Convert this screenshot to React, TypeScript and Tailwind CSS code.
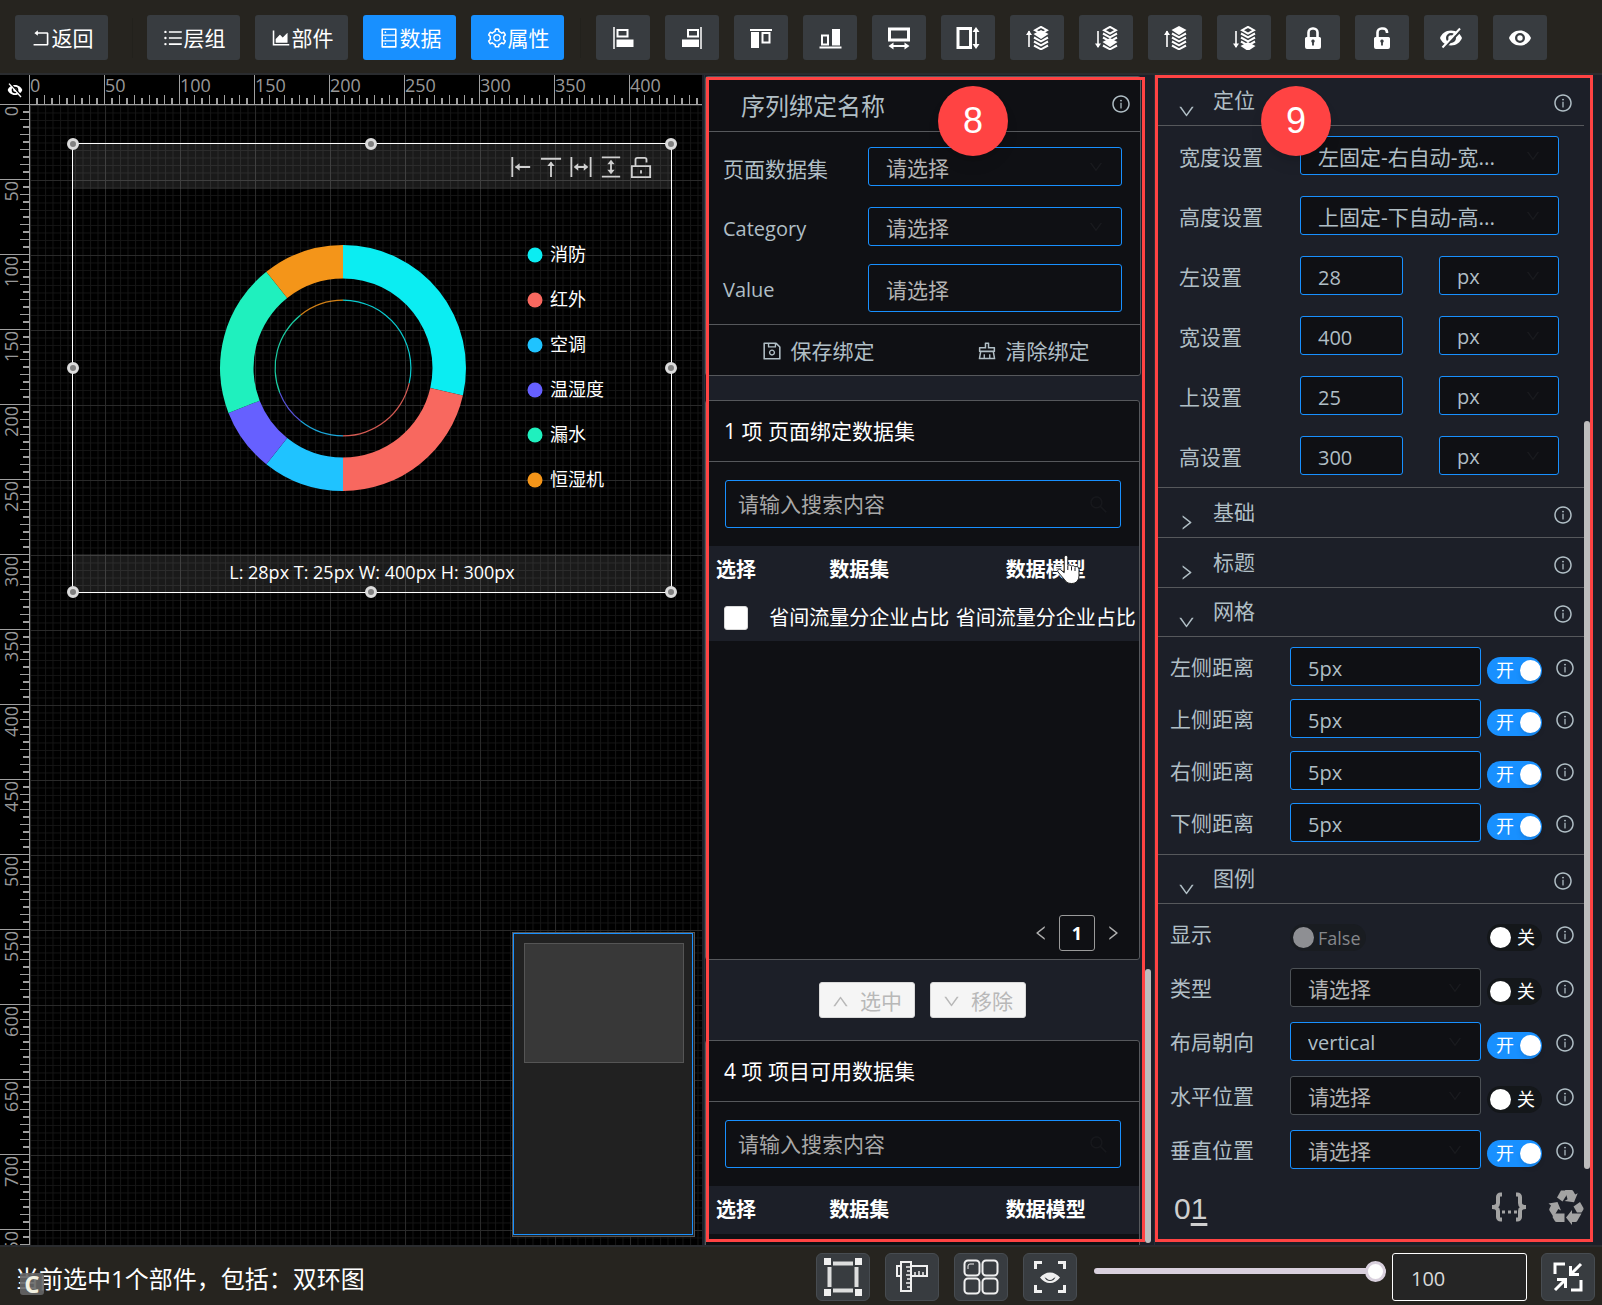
import { useId, useState, type ReactNode } from "react";
import clsx from "clsx";
import {
  AiOutlineAreaChart,
  AiOutlineClear,
  AiOutlineDatabase,
  AiOutlineDown,
  AiOutlineInfoCircle,
  AiOutlineLeft,
  AiOutlineRight,
  AiOutlineRollback,
  AiOutlineSave,
  AiOutlineSearch,
  AiOutlineSetting,
  AiOutlineUnorderedList,
  AiOutlineUp,
} from "react-icons/ai";

const PX_PER_UNIT = 1.5;

const slices = [
  { name: "消防", color: "#0bedf2", from: 0, to: 102.86 },
  { name: "红外", color: "#f8685f", from: 102.86, to: 180 },
  { name: "空调", color: "#1fc3ff", from: 180, to: 218.57 },
  { name: "温湿度", color: "#6660ff", from: 218.57, to: 248.6 },
  { name: "漏水", color: "#1ff0be", from: 248.6, to: 321.43 },
  { name: "恒湿机", color: "#f49519", from: 321.43, to: 360 },
];

/* ---------- icons ---------- */

function Glyph({ size = 24, children }: { size?: number; children: ReactNode }) {
  return (
    <svg width={size} height={size} viewBox="0 0 24 24" fill="none" stroke="currentColor" aria-hidden="true">
      {children}
    </svg>
  );
}

const AlignLeft = () => (
  <Glyph>
    <path d="M3 1v22" strokeWidth="1.5" />
    <rect x="6.5" y="4" width="10" height="6.5" strokeWidth="2" />
    <rect x="5.5" y="13.5" width="17" height="7.5" fill="currentColor" stroke="none" />
  </Glyph>
);

const AlignRight = () => (
  <Glyph>
    <path d="M21 1v22" strokeWidth="1.5" />
    <rect x="8" y="4" width="10" height="6.5" strokeWidth="2" />
    <rect x="2" y="13.5" width="17" height="7.5" fill="currentColor" stroke="none" />
  </Glyph>
);

const AlignTop = () => (
  <Glyph>
    <path d="M1 4h22" strokeWidth="2" />
    <rect x="2" y="6" width="8" height="16" fill="currentColor" stroke="none" />
    <rect x="13.5" y="7" width="7" height="9.5" strokeWidth="2" />
  </Glyph>
);

const AlignBottom = () => (
  <Glyph>
    <path d="M1.5 21.5h22" strokeWidth="2" />
    <rect x="4" y="9.5" width="6" height="9" strokeWidth="2" />
    <rect x="14" y="3" width="8" height="16.5" fill="currentColor" stroke="none" />
  </Glyph>
);

const SameWidth = () => (
  <Glyph>
    <rect x="2.5" y="3" width="19" height="11" strokeWidth="3" />
    <path d="M5 20h14" strokeWidth="2" />
    <path d="M1.5 20l5-3.5v7zM22.5 20l-5-3.5v7z" fill="currentColor" stroke="none" />
  </Glyph>
);

const SameHeight = () => (
  <Glyph>
    <rect x="2" y="2.5" width="12.5" height="19" strokeWidth="3" />
    <path d="M20 5v15" strokeWidth="1.8" />
    <path d="M20 1l3.5 5h-7zM20 23l3.5-5h-7z" fill="currentColor" stroke="none" />
  </Glyph>
);

function Layers({ arrow, solid }: { arrow: "up" | "down"; solid: number }) {
  return (
    <Glyph>
      <path d="M4 5v16" strokeWidth="1.6" />
      <path
        d={arrow === "up" ? "M4 4.5l3 4.5H1z" : "M4 22l3-4.5H1z"}
        fill="currentColor"
        stroke="none"
      />
      {[0, 1, 2, 3, 4].map((n) => {
        const y = 4 + n * 4;
        if (n === solid) {
          return (
            <path
              key={n}
              d={`M16 ${y - 4}l7.5 4l-7.5 5l-7.5 -5z`}
              fill="currentColor"
              stroke="none"
            />
          );
        }
        if (n === 0) {
          return <path key={n} d="M16 0.8l6 3.4l-6 3.4l-6-3.4z" strokeWidth="1.9" />;
        }
        return <path key={n} d={`M9 ${y - 0.5}l7 3.8l7-3.8`} strokeWidth="2" />;
      })}
    </Glyph>
  );
}

function Lock({ open = false }: { open?: boolean }) {
  return (
    <Glyph>
      <path
        d={open ? "M7.5 12V6.5a4 4 0 0 1 4-4h1.5a4 4 0 0 1 4 3.5v1" : "M7.5 12V6.5a4 4 0 0 1 4-4h1a4 4 0 0 1 4 4V12"}
        strokeWidth="2.6"
      />
      <path
        d="M5.5 11h13a1.5 1.5 0 0 1 1.5 1.5v8.5a2 2 0 0 1-2 2H6a2 2 0 0 1-2-2v-8.5A1.5 1.5 0 0 1 5.5 11zM12 13.5a1.8 1.8 0 0 0-.9 3.3v2.7h1.8v-2.7a1.8 1.8 0 0 0-.9-3.3z"
        fill="currentColor"
        stroke="none"
        fillRule="evenodd"
      />
    </Glyph>
  );
}

const eyePath =
  "M12 4.5C6.5 4.5 2.5 8 1 12c1.5 4 5.5 7.5 11 7.5S21.5 16 23 12c-1.5-4-5.5-7.5-11-7.5zM12 7a5 5 0 1 1 0 10a5 5 0 0 1 0-10zM12 9.3a2.7 2.7 0 1 0 0 5.4a2.7 2.7 0 0 0 0-5.4z";

const Eye = () => (
  <Glyph>
    <path d={eyePath} fill="currentColor" stroke="none" fillRule="evenodd" />
  </Glyph>
);

function EyeOff({ size = 24, flip = false }: { size?: number; flip?: boolean }) {
  const id = useId();
  return (
    <Glyph size={size}>
      <mask id={id}>
        <rect width="24" height="24" fill="#fff" stroke="none" />
        <path d={flip ? "M4 1l18 20" : "M22 4.5L5 22.5"} stroke="#000" strokeWidth="2.2" />
      </mask>
      <path d={eyePath} fill="currentColor" stroke="none" fillRule="evenodd" mask={`url(#${id})`} />
      <path d={flip ? "M3 2.5l18 20" : "M21 2.5L3.5 21.5"} strokeWidth="2" />
    </Glyph>
  );
}

const FrameIcon = () => (
  <svg width="38" height="38" viewBox="0 0 38 38" fill="currentColor" aria-hidden="true">
    <path d="M0 0h7v7H0zM31 0h7v7h-7zM0 31h7v7H0zM31 31h7v7h-7z" />
    <path d="M9 3.5h20v4H9zM9 30.5h20v4H9zM3.5 9h4v20h-4zM30.5 9h4v20h-4z" opacity="0.9" />
  </svg>
);

const RulerIcon = () => (
  <svg width="34" height="34" viewBox="0 0 34 34" fill="none" stroke="currentColor" strokeWidth="2" aria-hidden="true">
    <path d="M6 2h10v29H6zM16 6h16v10H16M6 6H2v10h4" />
    <path d="M11 7h5M12 11h4M11 15h5M12 19h4M11 23h5M12 27h4M20 16v-4M24 16v-5M28 16v-4" strokeWidth="1.5" />
  </svg>
);

const GridIcon = () => (
  <svg width="36" height="36" viewBox="0 0 36 36" fill="none" stroke="currentColor" strokeWidth="2" aria-hidden="true">
    <rect x="1.5" y="1.5" width="15" height="15" rx="3.5" />
    <rect x="19.5" y="1.5" width="15" height="15" rx="3.5" />
    <rect x="1.5" y="19.5" width="15" height="15" rx="3.5" />
    <rect x="19.5" y="19.5" width="15" height="15" rx="3.5" />
    <path d="M5 10V7a2 2 0 0 1 2-2h4" strokeWidth="1" />
  </svg>
);

const ScanEyeIcon = () => (
  <svg width="32" height="32" viewBox="0 0 32 32" fill="none" stroke="currentColor" aria-hidden="true">
    <path d="M8 1.5H1.5V8M24 1.5h6.5V8M8 30.5H1.5V24M24 30.5h6.5V24" strokeWidth="3" />
    <path
      d="M6 16.5c2.5-3 6-5 10-5s7.5 2 10 5c-2.5 3.5-6 5.5-10 5.5s-7.5-2-10-5.5zM10.5 15.5c.5 3 3 4.5 5.5 4.5s5-1.5 5.5-4.5c-.6 1-1.2 1.5-2 1.8c0 0-1 1.7-3.5 1.7s-3.5-1.7-3.5-1.7c-.8-.3-1.4-.8-2-1.8z"
      fill="currentColor"
      stroke="none"
      fillRule="evenodd"
    />
  </svg>
);

const ShrinkIcon = () => (
  <svg width="30" height="30" viewBox="0 0 30 30" fill="none" stroke="currentColor" strokeWidth="3" aria-hidden="true">
    <path d="M2 12V2h10M28 18v10H18" />
    <path d="M28 2l-9 9M17.5 4v8.5H26M2 28l9-9M4 17.5h8.5V26" />
  </svg>
);

const BracesIcon = () => (
  <svg width="36" height="30" viewBox="0 0 36 30" fill="none" stroke="currentColor" strokeWidth="3" aria-hidden="true">
    <path
      d="M11 2.5H9.5a2.5 2.5 0 0 0-2.500 2.500v6c0 2.500-1.500 4-6 4c4.500 0 6 1.500 6 4v6a2.500 2.500 0 0 0 2.500 2.500H11M25 2.500h1.500a2.500 2.500 0 0 1 2.500 2.500v6c0 2.500 1.500 4 6 4c-4.500 0-6 1.500-6 4v6a2.500 2.500 0 0 1-2.500 2.500H25"
      strokeWidth="4"
    />
    <path d="M11 20h3M17 20h3M23 20h3" />
  </svg>
);

const RecycleIcon = () => (
  <svg width="36" height="35" viewBox="0 0 36 35" fill="currentColor" aria-hidden="true">
    <path d="M9 7.5L13 0.500h5.500L20 3l-5.500 8.500z" />
    <path d="M17 0h6.500a2 2 0 0 1 1.700 1l2 3.500l2.500-1.300l-3.700 9l-9.500-1.200l3-1.700z" />
    <path d="M0.500 13.500L9.500 12L13 20.500l-2.700-1.500L5.500 27l-4-6.500a2 2 0 0 1 0-2l1.500-3z" />
    <path d="M6.500 23.500H16.500V32H8.500a2 2 0 0 1-1.700-1l-2.300-4z" />
    <path d="M25.500 16.500l6.500-4.500l3.300 5.700a2 2 0 0 1 0 2L33.500 22.500h-4.500z" />
    <path d="M18 27.500L24 20v3.500h9.500l-4.300 7.500a2 2 0 0 1-1.700 1H24v3z" />
  </svg>
);

const HandCursor = () => (
  <svg width="26" height="31" viewBox="0 0 26 31" aria-hidden="true">
    <path
      d="M10 1.5c1 0 1.8.8 1.8 2v8c.6-.8 3-.8 3.6.6c1-.8 3-.5 3.6.8c1.2-.8 4-.2 4 2.3v6c0 5-2.5 8.3-7.5 8.3c-4 0-5.5-1.5-7.3-4.3L2 18c-1-1.8.8-3.6 2.7-2.3l3.5 3V3.5c0-1.2.8-2 1.8-2z"
      fill="#fff"
      stroke="#1b1b1b"
      strokeWidth="1"
    />
    <path d="M11.8 12v4M15.5 12.5v4M19 13.5v3.5" stroke="#1b1b1b" strokeWidth="1" />
  </svg>
);

/* ---------- toolbar ---------- */

const menuButtons = [
  { label: "层组", icon: AiOutlineUnorderedList, active: false },
  { label: "部件", icon: AiOutlineAreaChart, active: false },
  { label: "数据", icon: AiOutlineDatabase, active: true },
  { label: "属性", icon: AiOutlineSetting, active: true },
];

const toolButtons = [
  { title: "左对齐", icon: <AlignLeft /> },
  { title: "右对齐", icon: <AlignRight /> },
  { title: "上对齐", icon: <AlignTop /> },
  { title: "下对齐", icon: <AlignBottom /> },
  { title: "等宽", icon: <SameWidth /> },
  { title: "等高", icon: <SameHeight /> },
  { title: "上移一层", icon: <Layers arrow="up" solid={1} /> },
  { title: "下移一层", icon: <Layers arrow="down" solid={3} /> },
  { title: "置顶", icon: <Layers arrow="up" solid={0} /> },
  { title: "置底", icon: <Layers arrow="down" solid={4} /> },
  { title: "锁定", icon: <Lock /> },
  { title: "解锁", icon: <Lock open /> },
  { title: "隐藏", icon: <EyeOff /> },
  { title: "显示", icon: <Eye /> },
];

function Toolbar() {
  return (
    <header className="flex h-[75px] shrink-0 items-center border-b-2 border-[#2a2c2f] bg-[#26241f] pt-0.5 pl-[15px] text-white">
      <button className="flex h-[45px] w-[93px] items-center justify-center rounded-[3px] bg-[#383c40]">
        <AiOutlineRollback size={22} />
        返回
      </button>
      <div className="mr-3.5 ml-6 h-10 w-px bg-[#22211c]" />
      <nav className="flex gap-[15px]">
        {menuButtons.map(({ label, icon: Icon, active }) => (
          <button
            key={label}
            className={clsx(
              "flex h-[45px] w-[93px] items-center justify-center rounded-[3px]",
              active ? "bg-[#1890ff]" : "bg-[#383c40]"
            )}
          >
            <Icon size={22} />
            {label}
          </button>
        ))}
      </nav>
      <div className="mr-[15px] ml-4 h-10 w-px bg-[#22211c]" />
      <div className="flex gap-[15px]">
        {toolButtons.map((tool) => (
          <button
            key={tool.title}
            aria-label={tool.title}
            className="flex h-[45px] w-[54px] items-center justify-center rounded-[3px] bg-[#383c40]"
          >
            {tool.icon}
          </button>
        ))}
      </div>
    </header>
  );
}

/* ---------- canvas ---------- */

function HorizontalRuler() {
  const ticks = Array.from({ length: 240 }, (_, i) => i + 1);
  return (
    <svg className="block h-[29px] w-full" aria-hidden="true">
      {ticks.map((i) => {
        const x = i * 5 * PX_PER_UNIT - 0.5;
        if (i % 10 === 0) return <path key={i} d={`M${x} 0V29`} stroke="#a0a0a0" />;
        if (i % 2 === 0) return <path key={i} d={`M${x} 20V29`} stroke="#a0a0a0" />;
        return <path key={i} d={`M${x} 23V29`} stroke="#a0a0a0" strokeWidth="2" />;
      })}
      {Array.from({ length: 9 }, (_, i) => (
        <text key={i} x={i * 75} y="17" fontSize="18" fill="#989898">
          {i * 50}
        </text>
      ))}
    </svg>
  );
}

function VerticalRuler() {
  const ticks = Array.from({ length: 240 }, (_, i) => i + 1);
  return (
    <svg className="block h-full w-[29px]" aria-hidden="true">
      {ticks.map((i) => {
        const y = i * 5 * PX_PER_UNIT - 0.5;
        if (i % 10 === 0) return <path key={i} d={`M0 ${y}H29`} stroke="#a0a0a0" />;
        if (i % 2 === 0) return <path key={i} d={`M20 ${y}H29`} stroke="#a0a0a0" />;
        return <path key={i} d={`M23 ${y}H29`} stroke="#a0a0a0" strokeWidth="2" />;
      })}
      {Array.from({ length: 16 }, (_, i) => (
        <text
          key={i}
          transform={`translate(18 ${i * 75 + 1}) rotate(-90)`}
          textAnchor="end"
          fontSize="18"
          fill="#989898"
        >
          {i * 50}
        </text>
      ))}
    </svg>
  );
}

function point(radius: number, angle: number) {
  const rad = (angle * Math.PI) / 180;
  return `${270 + radius * Math.sin(rad)} ${224 - radius * Math.cos(rad)}`;
}

function ringPath(outer: number, inner: number, from: number, to: number) {
  return (
    `M${point(outer, from)}A${outer} ${outer} 0 0 1 ${point(outer, to)}` +
    `L${point(inner, to)}A${inner} ${inner} 0 0 0 ${point(inner, from)}Z`
  );
}

function DoubleRing() {
  return (
    <svg className="block h-full w-full" viewBox="0 0 598 448" role="img" aria-label="双环图">
      {slices.map((s, i) => (
        <g key={s.name}>
          <path d={ringPath(123, 89.5, s.from, s.to)} fill={s.color} />
          <path d={ringPath(68.5, 67.3, s.from, s.to)} fill={s.color} opacity="0.85" />
          <circle cx="462" cy={111 + i * 45} r="7.5" fill={s.color} />
          <text x="477" y={117 + i * 45} fontSize="18" fill="#fff">
            {s.name}
          </text>
        </g>
      ))}
    </svg>
  );
}

const handles = [
  "-left-1.5 -top-1.5",
  "left-[292px] -top-1.5",
  "-right-1.5 -top-1.5",
  "-left-1.5 top-[218px]",
  "-right-1.5 top-[218px]",
  "-left-1.5 -bottom-1.5",
  "left-[292px] -bottom-1.5",
  "-right-1.5 -bottom-1.5",
];

function Widget() {
  return (
    <div className="absolute top-[38px] left-[42px] h-[450px] w-[600px] border border-white">
      <DoubleRing />
      <div className="absolute inset-x-0 top-0 flex h-[45px] items-center justify-end gap-2 bg-white/10 pr-[19px] text-[#d0d0d0]">
        <Glyph size={22}>
          <path d="M2.5 1v22M6 12h16" strokeWidth="2" />
          <path d="M5.5 12l5-4v8z" fill="currentColor" stroke="none" />
        </Glyph>
        <Glyph size={22}>
          <path d="M1 3h22M12 7v16" strokeWidth="2" />
          <path d="M12 6l4 5H8z" fill="currentColor" stroke="none" />
        </Glyph>
        <Glyph size={22}>
          <path d="M1.5 1v22M22.5 1v22M6 12h12" strokeWidth="2" />
          <path d="M4 12l5-4v8zM20 12l-5-4v8z" fill="currentColor" stroke="none" />
        </Glyph>
        <Glyph size={22}>
          <path d="M2 1.5h20M2 22.5h20M12 6v12" strokeWidth="2" />
          <path d="M12 4l4 5H8zM12 20l4-5H8z" fill="currentColor" stroke="none" />
        </Glyph>
        <Glyph size={22}>
          <path d="M2 11h20v12H2zM6 11V4a2 2 0 0 1 2-2h8a2 2 0 0 1 2 2v3M12 15.5v3.5" strokeWidth="2" />
        </Glyph>
      </div>
      <div className="absolute inset-x-0 bottom-0 flex h-[38px] items-center justify-center bg-white/10 pb-0.5 text-lg text-white">
        L: 28px T: 25px W: 400px H: 300px
      </div>
      {handles.map((place) => (
        <span
          key={place}
          className={clsx("absolute size-3 rounded-full border-[3px] border-[#dcdcdc] bg-[#808080]", place)}
        />
      ))}
    </div>
  );
}

function Canvas() {
  return (
    <section className="grid min-w-0 flex-1 grid-cols-[30px_1fr] grid-rows-[30px_1fr] overflow-hidden border-r-2 border-[#1c1f28] bg-black">
      <div className="flex items-center justify-center border-r border-b border-[#a0a0a0] text-white">
        <EyeOff size={16} flip />
      </div>
      <div className="border-b border-[#a0a0a0]">
        <HorizontalRuler />
      </div>
      <div className="min-h-0 overflow-hidden border-r border-[#a0a0a0]">
        <VerticalRuler />
      </div>
      <div className="relative min-h-0 overflow-hidden">
        <svg className="block h-full w-full" aria-hidden="true">
          <defs>
            <pattern id="minor" width="7.5" height="7.5" patternUnits="userSpaceOnUse">
              <path d="M0.5 0V7.5M0 0.5H7.5" stroke="#151515" />
            </pattern>
            <pattern id="major" width="75" height="75" patternUnits="userSpaceOnUse">
              <path d="M0.5 0V75M0 0.5H75" stroke="#2a2a2a" />
            </pattern>
          </defs>
          <rect width="100%" height="100%" fill="url(#minor)" />
          <rect width="100%" height="100%" fill="url(#major)" />
        </svg>
        <Widget />
        <div className="absolute right-[7px] bottom-2 h-[305px] w-[183px] border border-[#555] bg-[#212121]">
          <div className="h-[302px] w-[180px] border border-[#1890ff] px-2.5 pt-[9px]">
            <div className="h-[120px] w-[160px] border border-[#555] bg-[#383838]" />
          </div>
        </div>
      </div>
    </section>
  );
}

/* ---------- form controls ---------- */

interface SelectProps {
  id?: string;
  label?: string;
  value: string;
  tall?: boolean;
  muted?: boolean;
  off?: boolean;
  latin?: boolean;
  arrow?: boolean;
}

function Select({ id, label, value, tall, muted, off, latin, arrow = true }: SelectProps) {
  return (
    <div className="relative min-w-0 flex-1">
      <select
        id={id}
        aria-label={label}
        className={clsx(
          "block w-full appearance-none rounded-[3px] border bg-[#0f1014] pt-[3px] pl-[17px] outline-none",
          tall ? "h-12" : "h-[39px]",
          off ? "border-[#4c5156]" : "border-[#1890ff]",
          muted ? "text-[#b3b3b3]" : "text-[#b0bec5]",
          latin && "text-xl"
        )}
      >
        <option>{value}</option>
      </select>
      {arrow && (
        <AiOutlineDown
          size={16}
          className="pointer-events-none absolute top-3 right-[18px] text-[#1a1b1f]"
        />
      )}
    </div>
  );
}

function Switch({ label, defaultOn }: { label: string; defaultOn: boolean }) {
  const [on, setOn] = useState(defaultOn);
  return (
    <label
      className={clsx(
        "mt-2 flex h-[27px] w-[55px] shrink-0 items-center gap-1 rounded-full text-lg leading-none text-white",
        on ? "bg-[#1890ff] pl-[7px]" : "flex-row-reverse justify-end bg-[#14171a] pl-[3px]"
      )}
    >
      <input
        type="checkbox"
        role="switch"
        aria-label={label}
        className="sr-only"
        checked={on}
        onChange={(e) => setOn(e.target.checked)}
      />
      <span className="w-[22px] pb-0.5 text-center">{on ? "开" : "关"}</span>
      <span className={clsx("size-[21px] rounded-full bg-white", on && "shadow-md")} />
    </label>
  );
}

function Info({ className }: { className?: string }) {
  return <AiOutlineInfoCircle size={20} className={clsx("shrink-0 text-[#b0bec5]", className)} />;
}

/* ---------- data panel ---------- */

interface DatasetCardProps {
  count: number;
  title: string;
  rows: string[][];
  paged?: boolean;
}

function DatasetCard({ count, title, rows, paged }: DatasetCardProps) {
  return (
    <section className="mr-px rounded-[3px] border border-[#56585c] bg-[#0f1014] text-white">
      <h3 className="flex h-[61px] items-center border-b border-[#56585c] px-[18px]">
        {count} 项 {title}
      </h3>
      <div className="relative py-[18px] pr-[18px] pl-[19px]">
        <input
          type="search"
          aria-label={title}
          placeholder="请输入搜索内容"
          className="block h-12 w-full rounded-[3px] border border-[#1890ff] bg-transparent px-3 outline-none placeholder:text-[#a8a8a8]"
        />
        <AiOutlineSearch size={21} className="absolute top-8 right-[30px] text-[#17181c]" />
      </div>
      <div className="min-h-[369px]">
        <table className="w-full table-fixed bg-[#1c1f28] text-center text-xl">
          <thead>
            <tr className="h-12">
              <th className="w-[60px]">选择</th>
              <th>数据集</th>
              <th className="relative">
                数据模型
                {paged && (
                  <span className="absolute top-2 left-[103px]">
                    <HandCursor />
                  </span>
                )}
              </th>
            </tr>
          </thead>
          <tbody>
            {rows.map((row) => (
              <tr key={row[0]} className="h-[47px]">
                <td>
                  <input
                    type="checkbox"
                    aria-label={row[0]}
                    className="mx-auto block size-6 appearance-none rounded-[3px] border border-[#d9d9d9] bg-white"
                  />
                </td>
                {row.map((cell, i) => (
                  <td key={i} className="whitespace-nowrap">
                    {cell}
                  </td>
                ))}
              </tr>
            ))}
          </tbody>
        </table>
      </div>
      {paged && (
        <div className="flex justify-end pr-2 pb-2 text-[#b0b0b0]">
          <button aria-label="上一页" className="flex size-9 items-center justify-center">
            <AiOutlineLeft size={18} />
          </button>
          <button className="size-9 rounded-[3px] border border-[#9a9a9a] text-lg font-bold text-white">1</button>
          <button aria-label="下一页" className="flex size-9 items-center justify-center">
            <AiOutlineRight size={18} />
          </button>
        </div>
      )}
    </section>
  );
}

function Marker({ n, className }: { n: number; className: string }) {
  return (
    <span
      className={clsx(
        "absolute flex size-[70px] items-center justify-center rounded-full bg-[#ff4343] font-['Liberation_Sans'] text-4xl text-white shadow-lg",
        className
      )}
    >
      {n}
    </span>
  );
}

const bindings = [
  { id: "page-dataset", label: "页面数据集" },
  { id: "category", label: "Category" },
];

function DataPanel() {
  return (
    <aside className="relative flex w-[450px] shrink-0 border-l border-[#2b2f36] bg-[#1c1f28]">
      <div className="w-[436px] overflow-hidden pt-px">
        <section className="rounded-[3px] border border-[#56585c] bg-[#0f1014] text-[#b0bec5]">
          <h2 className="flex h-[55px] items-center justify-between border-b border-[#56585c] pt-1 pr-[9px] pl-[35px] text-2xl">
            序列绑定名称
            <Info className="mb-1" />
          </h2>
          <div className="pt-[15px] pr-[18px] pb-3 pl-[17px]">
            {bindings.map((b) => (
              <div key={b.id} className="mb-[21px] flex items-center">
                <label
                  htmlFor={b.id}
                  className={clsx("w-[145px] shrink-0 pt-1", b.id === "category" && "text-xl")}
                >
                  {b.label}
                </label>
                <Select id={b.id} value="请选择" muted />
              </div>
            ))}
            <div className="-mt-[3px] flex items-center">
              <label htmlFor="value" className="w-[145px] shrink-0 pt-1 text-xl">
                Value
              </label>
              <Select id="value" value="请选择" muted tall arrow={false} />
            </div>
          </div>
          <div className="grid h-[51px] grid-cols-2 border-t border-[#56585c] pt-0.5 pl-1">
            <button className="flex items-center justify-center gap-2">
              <AiOutlineSave size={22} />
              保存绑定
            </button>
            <button className="flex items-center justify-center gap-2">
              <AiOutlineClear size={22} />
              清除绑定
            </button>
          </div>
        </section>
        <div className="mt-6">
          <DatasetCard
            count={1}
            title="页面绑定数据集"
            rows={[["省间流量分企业占比", "省间流量分企业占比"]]}
            paged
          />
        </div>
        <div className="flex justify-center gap-[15px] pt-[22px] pr-0.5 pb-[22px] text-[#b8b8b8]">
          <button
            disabled
            className="flex h-9 w-24 items-center justify-center gap-2.5 rounded-[3px] border border-[#d9d9d9] bg-[#f5f5f5] pt-0.5"
          >
            <AiOutlineUp size={19} />
            选中
          </button>
          <button
            disabled
            className="flex h-9 w-24 items-center justify-center gap-2.5 rounded-[3px] border border-[#d9d9d9] bg-[#f5f5f5] pt-0.5"
          >
            <AiOutlineDown size={19} />
            移除
          </button>
        </div>
        <DatasetCard count={4} title="项目可用数据集" rows={[]} />
      </div>
      <div className="ml-1 flex w-1.5 flex-col justify-end pb-0.5">
        <div className="h-[23.5%] rounded-[3px] bg-[#bdbdbd]" />
      </div>
      <div className="pointer-events-none absolute top-0.5 right-[9px] bottom-[3px] left-px border-[3px] border-[#ff4343]" />
      <Marker n={8} className="top-[11px] left-[233px]" />
    </aside>
  );
}

/* ---------- property panel ---------- */

function Section({ title, children }: { title: string; children?: ReactNode }) {
  return (
    <section className="border-t border-[#56585c]">
      <h3
        className={clsx(
          "flex h-[49px] items-center pr-[11px] pl-[22px]",
          children && "border-b border-[#56585c]"
        )}
      >
        {children ? (
          <AiOutlineDown size={19} className="mt-5" />
        ) : (
          <AiOutlineRight size={19} className="mt-5" />
        )}
        <span className="ml-[17px] flex-1 pb-0.5">{title}</span>
        <Info className="mt-1" />
      </h3>
      {children}
    </section>
  );
}

const sizes = [
  { id: "left", label: "左设置", value: "28" },
  { id: "width", label: "宽设置", value: "400" },
  { id: "top", label: "上设置", value: "25" },
  { id: "height", label: "高设置", value: "300" },
];

const margins = ["左侧距离", "上侧距离", "右侧距离", "下侧距离"];

const legendOptions = [
  { label: "类型", value: "请选择", on: false },
  { label: "布局朝向", value: "vertical", on: true },
  { label: "水平位置", value: "请选择", on: false },
  { label: "垂直位置", value: "请选择", on: true },
];

interface OptionRowProps {
  id: string;
  label: string;
  on: boolean;
  children: ReactNode;
}

function OptionRow({ id, label, on, children }: OptionRowProps) {
  return (
    <div className="flex h-[39px] items-center">
      <label htmlFor={id} className="w-[120px] shrink-0">
        {label}
      </label>
      {children}
      <div className="mr-[13px] ml-1.5">
        <Switch label={label} defaultOn={on} />
      </div>
      <Info className="mt-0.5" />
    </div>
  );
}

function PropertyPanel() {
  return (
    <aside className="relative flex w-[448px] shrink-0 flex-col border-l border-[#2b2f36] bg-[#1c1f28] text-[#b0bec5]">
      <div className="mr-3 flex">
        <div className="min-w-0 flex-1 pt-px">
          <Section title="定位">
            <div className="flex flex-col gap-[21px] pt-2.5 pr-[25px] pb-3 pl-6">
              <div className="flex items-center">
                <label htmlFor="fit-width" className="w-[121px] shrink-0 pt-0.5">
                  宽度设置
                </label>
                <Select id="fit-width" value="左固定-右自动-宽..." />
              </div>
              <div className="flex items-center">
                <label htmlFor="fit-height" className="w-[121px] shrink-0 pt-0.5">
                  高度设置
                </label>
                <Select id="fit-height" value="上固定-下自动-高..." />
              </div>
              {sizes.map((s) => (
                <div key={s.id} className="flex items-center">
                  <label htmlFor={s.id} className="w-[121px] shrink-0 pt-0.5">
                    {s.label}
                  </label>
                  <input
                    id={s.id}
                    defaultValue={s.value}
                    className="mr-9 h-[39px] w-[103px] rounded-[3px] border border-[#1890ff] bg-[#0f1014] pt-[3px] pl-[17px] text-xl outline-none"
                  />
                  <Select label={`${s.label}单位`} value="px" latin />
                </div>
              ))}
            </div>
          </Section>
          <Section title="基础" />
          <Section title="标题" />
          <Section title="网格">
            <div className="flex flex-col gap-[13px] pt-2.5 pr-[9px] pb-3 pl-[15px]">
              {margins.map((label) => (
                <OptionRow key={label} id={label} label={label} on>
                  <input
                    id={label}
                    defaultValue="5px"
                    className="h-[39px] min-w-0 flex-1 rounded-[3px] border border-[#1890ff] bg-[#0f1014] pt-[3px] pl-[17px] text-xl outline-none"
                  />
                </OptionRow>
              ))}
            </div>
          </Section>
          <Section title="图例">
            <div className="flex flex-col gap-[15px] pt-2.5 pr-[9px] pl-[15px]">
              <OptionRow id="legend-show" label="显示" on={false}>
                <div className="min-w-0 flex-1">
                  <span className="mt-2 flex h-[27px] w-[76px] items-center gap-1 rounded-full bg-[#191c21] pl-[3px] text-lg text-[#85878b]">
                    <input
                      id="legend-show"
                      type="checkbox"
                      role="switch"
                      disabled
                      className="size-[21px] appearance-none rounded-full bg-[#8e8f93]"
                    />
                    False
                  </span>
                </div>
              </OptionRow>
              {legendOptions.map((o) => (
                <OptionRow key={o.label} id={o.label} label={o.label} on={o.on}>
                  <Select
                    id={o.label}
                    value={o.value}
                    off={!o.on}
                    muted={o.value === "请选择"}
                    latin={o.value === "vertical"}
                  />
                </OptionRow>
              ))}
            </div>
          </Section>
        </div>
        <div className="flex w-1.5 flex-col justify-end">
          <div className="h-[68.4%] rounded-[3px] bg-[#bdbdbd]" />
        </div>
      </div>
      <div className="flex flex-1 items-center gap-[21px] pr-[18px] pl-[19px] text-[#a3a3a3]">
        <button className="mr-auto pt-1 font-['Liberation_Sans'] text-3xl text-[#cfcfcf]">
          0<span className="underline underline-offset-4">1</span>
        </button>
        <button aria-label="数据">
          <BracesIcon />
        </button>
        <button aria-label="重置">
          <RecycleIcon />
        </button>
      </div>
      <div className="pointer-events-none absolute top-0 right-[9px] bottom-[3px] left-0 border-[3px] border-[#ff4343]" />
      <Marker n={9} className="top-[11px] left-[106px]" />
    </aside>
  );
}

/* ---------- status bar ---------- */

const viewButtons = [
  { title: "边框", icon: <FrameIcon /> },
  { title: "标尺", icon: <RulerIcon /> },
  { title: "网格", icon: <GridIcon /> },
  { title: "预览", icon: <ScanEyeIcon /> },
];

function StatusBar() {
  const [zoom, setZoom] = useState("100");

  return (
    <footer className="relative flex h-[60px] shrink-0 items-center border-t-2 border-[#2a2c2f] bg-[#26241f] pt-0.5 pr-[7px] pl-[15px] text-white">
      <p className="flex-1 pt-1 text-2xl">当前选中1个部件，包括：双环图</p>
      <span className="absolute top-[26px] left-5 flex h-[22px] w-6 items-center justify-center rounded-[3px] bg-[#666]/90 text-2xl font-bold text-[#f3f1e0]">
        C
      </span>
      <div className="flex gap-[15px]">
        {viewButtons.map((b) => (
          <button
            key={b.title}
            aria-label={b.title}
            className="flex h-12 w-[54px] items-center justify-center rounded-md border border-[#474c51] bg-[#383c40] text-[#f0f0f0]"
          >
            {b.icon}
          </button>
        ))}
      </div>
      <input
        type="range"
        min="10"
        max="100"
        aria-label="缩放"
        value={zoom}
        onChange={(e) => setZoom(e.target.value)}
        className="mr-1.5 mb-3 ml-[17px] h-1.5 w-[292px] appearance-none rounded-full bg-[#d9d0dd] [&::-webkit-slider-thumb]:size-[21px] [&::-webkit-slider-thumb]:appearance-none [&::-webkit-slider-thumb]:rounded-full [&::-webkit-slider-thumb]:border-[3px] [&::-webkit-slider-thumb]:border-[#d9d0dd] [&::-webkit-slider-thumb]:bg-white"
      />
      <input
        aria-label="缩放比例"
        value={zoom}
        onChange={(e) => setZoom(e.target.value)}
        className="mr-3.5 h-12 w-[135px] rounded-[3px] border border-white bg-[#252525] pt-0.5 pl-[18px] text-xl text-[#d9d9d9] outline-none"
      />
      <button
        aria-label="退出全屏"
        className="flex h-12 w-[54px] items-center justify-center rounded-md border border-[#474c51] bg-[#383c40]"
      >
        <ShrinkIcon />
      </button>
    </footer>
  );
}

export default function App() {
  return (
    <div className="flex h-screen flex-col overflow-hidden bg-[#1c1f28] font-['Open_Sans','Noto_Sans_CJK_SC',sans-serif] text-[21px] leading-7">
      <Toolbar />
      <main className="flex min-h-0 flex-1">
        <Canvas />
        <DataPanel />
        <PropertyPanel />
      </main>
      <StatusBar />
    </div>
  );
}
